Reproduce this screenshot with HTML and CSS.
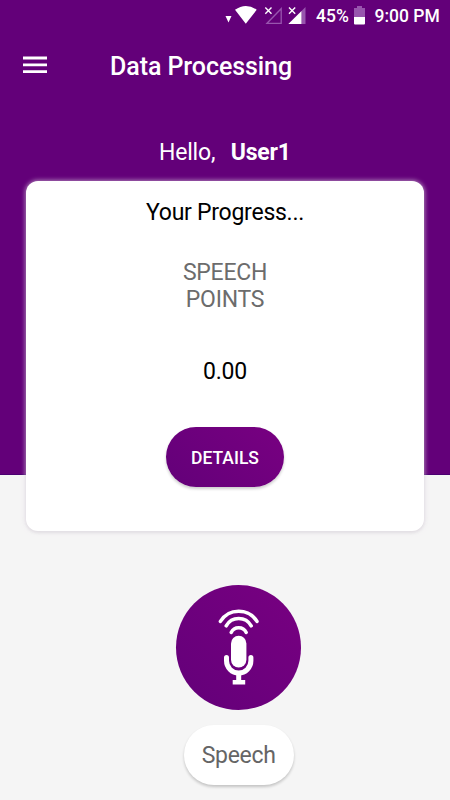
FILE: index.html
```
<!DOCTYPE html>
<html lang="en">
<head>
<meta charset="utf-8">
<title>Data Processing</title>
<link rel="stylesheet" href="styles.css">
</head>
<body>
<header class="hero">
  <div class="status">
    <svg class="status-icons" width="84" height="32" viewBox="0 0 84 32">
      <path fill="#fff" d="M.5 16h6l-3 6.500zM10 9.800Q20.800 2 31.700 9.800L20.800 23.800z"/>
      <path fill="none" stroke="#9855ae" stroke-width="1.300" d="M42 23.300 56.200 8.700v14.600z"/>
      <path fill="#9855ae" d="M80.500 7v17h-4V11z"/>
      <path fill="#fff" d="M63.300 24 76.500 11v13z"/>
      <path fill="none" stroke="#fff" stroke-width="1.400" d="m40.300 7.500 6.200 6.200m0-6.200-6.200 6.200"/>
      <path fill="none" stroke="#fff" stroke-width="1.400" d="m64 7.500 6.200 6.200m0-6.200L64 13.700"/>
    </svg>
    <span class="percent">45%</span>
    <svg class="battery" width="11" height="19" viewBox="0 0 11 19">
      <path fill="#9855ae" d="M0 2h3V0h5v2h3v9H0z"/>
      <path fill="#fff" d="M0 11h11v6.500q0 1-1 1H1q-1 0-1-1z"/>
    </svg>
    <span class="time">9:00 PM</span>
  </div>
  <div class="appbar">
    <svg class="menu" width="24" height="18" viewBox="0 0 24 18"><path fill="#fff" d="M0 .5h24v3H0zM0 7.500h24v2.800H0zM0 14.300h24v2.800H0z"/></svg>
    <h1 class="title">Data Processing</h1>
  </div>
  <p class="greeting">Hello, <b class="user">User1</b></p>
</header>
<main class="content">
  <section class="card">
    <h2 class="progress">Your Progress...</h2>
    <p class="label">SPEECH<br>POINTS</p>
    <p class="points">0.00</p>
    <button class="details">DETAILS</button>
  </section>
  <section class="speech">
    <div class="mic">
      <svg width="125" height="125" viewBox="0 0 125 125" fill="none" stroke="#fff" stroke-linecap="round">
        <g stroke-width="3.500">
          <path d="M44.400 36.400A21.500 21.500 0 0 1 81 36.400M50.200 40.800A14.300 14.300 0 0 1 75.200 40.800M55.200 47.400A8.300 8.300 0 0 1 70.200 47.400"/>
        </g>
        <rect x="55" y="50.800" width="15.400" height="31.700" rx="7.700" fill="#fff" stroke="none"/>
        <path stroke-width="5" d="M50.500 72.500v3.300a12.200 12.200 0 0 0 24.400 0v-3.300"/>
        <path fill="#fff" stroke="none" d="M60.200 87.500h5v7.500h4v4.500H56.700V95h3.500z"/>
      </svg>
    </div>
    <button class="speech-button">Speech</button>
  </section>
</main>
</body>
</html>
```
FILE: styles.css
```
* { box-sizing: border-box; }
body {
  margin: 0;
  height: 800px;
  overflow: hidden;
  background: #f5f5f5;
  font-family: Roboto, sans-serif;
}
h1, h2, p { margin: 0; font-weight: 400; }
button { border: 0; padding: 0; font-family: inherit; }
.hero {
  height: 475px;
  background: #630079;
  border-bottom: 1px solid #4b0071;
  color: #fff;
}
.status {
  display: flex;
  align-items: center;
  height: 32px;
  padding-left: 225px;
  font-size: 17.5px;
  font-weight: 500;
  white-space: nowrap;
}
.status-icons { flex: none; }
.percent { width: 38px; margin-left: 7px; }
.battery { flex: none; margin-top: -1px; }
.time { margin-left: 9.5px; }
.appbar {
  display: flex;
  align-items: center;
  height: 68px;
  padding-left: 23px;
}
.menu { margin-top: -2px; }
.title {
  margin-left: 63px;
  padding-top: 2px;
  font-size: 25px;
  font-weight: 500;
  letter-spacing: -.07px;
  line-height: 30px;
}
.greeting {
  margin-top: 38px;
  padding-left: 159px;
  font-size: 23px;
  letter-spacing: -.2px;
  line-height: 30px;
}
.user { margin-left: 10px; font-weight: 700; }
.content { margin-top: -294px; }
.card {
  display: flex;
  flex-direction: column;
  align-items: center;
  width: 398px;
  height: 350px;
  margin-left: 26px;
  padding-top: 17px;
  border-radius: 12px;
  background: #fff;
  box-shadow: 0 0 4px 1px rgba(220, 210, 224, .6), 0 2px 3px rgba(0, 0, 0, .06);
}
.progress, .label, .points { font-size: 23px; letter-spacing: -.26px; }
.progress, .points { line-height: 30px; color: #000; }
.label {
  margin-top: 32px;
  line-height: 26.5px;
  text-align: center;
  color: #6c6c6c;
}
.points { margin-top: 44px; }
.details {
  width: 118px;
  height: 60px;
  margin-top: 40px;
  padding-top: 1px;
  border-radius: 30px;
  background: linear-gradient(45deg, #630079, #780081);
  box-shadow: 0 2px 3px rgba(0, 0, 0, .2);
  color: #fff;
  font-size: 17.5px;
  font-weight: 500;
}
.speech {
  display: flex;
  flex-direction: column;
  align-items: center;
  width: 125px;
  margin: 53.500px 0 0 176.200px;
}
.mic {
  width: 125px;
  height: 125px;
  border-radius: 50%;
  background: linear-gradient(45deg, #630079, #780081);
}
.mic svg { display: block; }
.speech-button {
  width: 110px;
  height: 60px;
  margin-top: 15px;
  padding-top: 2px;
  border-radius: 30px;
  background: #fff;
  box-shadow: 0 2px 3px rgba(0, 0, 0, .2);
  color: #656565;
  font-size: 23px;
  letter-spacing: -.26px;
}
```
